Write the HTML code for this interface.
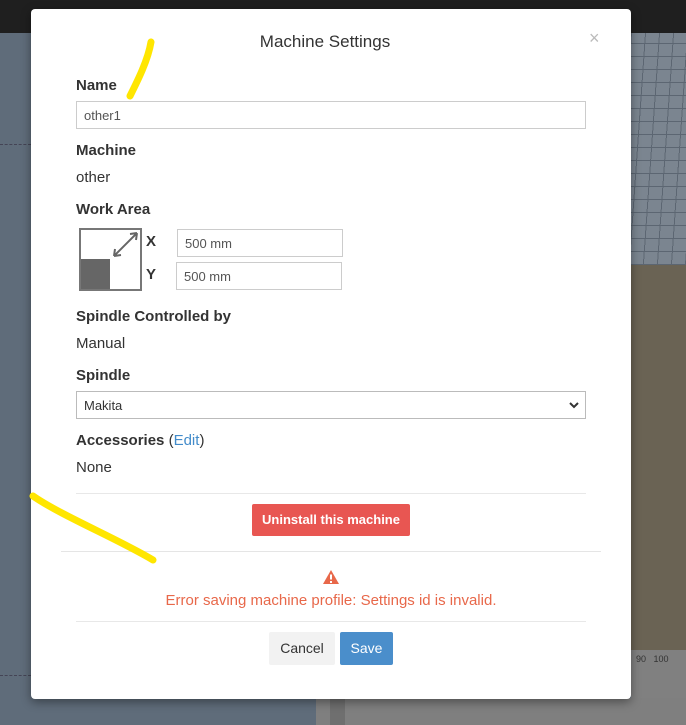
<!DOCTYPE html>
<html><head><style>
*{box-sizing:border-box}
body{margin:0;width:686px;height:725px;overflow:hidden;position:relative;font-family:"Liberation Sans",sans-serif;background:#5e6b79}
.abs{position:absolute}
.lbl{position:absolute;left:76px;font-weight:bold;font-size:15px;color:#333}
.val{position:absolute;left:76px;font-size:15px;color:#333}
.inp{position:absolute;border:1px solid #ccc;background:#fff;font-size:13px;color:#555;padding-left:7px;display:flex;align-items:center}
</style></head><body>
<div class="abs" style="left:0;top:0;width:686px;height:33px;background:#1f1f1f"></div>
<div class="abs" style="left:0;top:33px;width:686px;height:692px;background:#5f6c7a"></div>
<div class="abs" style="left:631px;top:33px;width:55px;height:232px;background:#7b8590;background-image:repeating-linear-gradient(0deg,#5c6672 0 1px,transparent 1px 13px),repeating-linear-gradient(94deg,#5c6672 0 1px,transparent 1px 14px)"></div>
<div class="abs" style="left:631px;top:265px;width:55px;height:385px;background:#6a6354"></div>
<div class="abs" style="left:631px;top:650px;width:55px;height:75px;background:#808080"></div>
<div class="abs" style="left:316px;top:698px;width:370px;height:27px;background:#7f7f7f"></div>
<div class="abs" style="left:330px;top:698px;width:15px;height:27px;background:#6f6f6f"></div>
<div class="abs" style="left:636px;top:654px;font-size:9px;color:#333">90&nbsp;&nbsp;&nbsp;100</div>
<div class="abs" style="left:0;top:144px;width:31px;border-top:1px dashed #445"></div>
<div class="abs" style="left:0;top:675px;width:31px;border-top:1px dashed #445"></div>

<div class="abs" style="left:31px;top:9px;width:600px;height:690px;background:#fff;border-radius:4px;box-shadow:0 3px 10px rgba(0,0,0,.4)"></div>
<div class="abs" style="left:0;top:32px;width:650px;text-align:center;font-size:17px;color:#333;padding-left:0"><span style="position:relative;left:0">&nbsp;</span></div>
<div class="abs" style="left:31px;top:32px;width:588px;text-align:center;font-size:17px;color:#333">Machine Settings</div>
<div class="abs" style="left:589px;top:28px;font-size:18px;color:#bbb">×</div>

<div class="lbl" style="top:77px">Name</div>
<div class="inp" style="left:76px;top:101px;width:510px;height:28px">other1</div>
<div class="lbl" style="top:142px">Machine</div>
<div class="val" style="top:169px">other</div>
<div class="lbl" style="top:201px">Work Area</div>
<div class="abs" style="left:79px;top:228px;width:63px;height:63px;border:2px solid #777;background:#fff"></div>
<div class="abs" style="left:81px;top:259px;width:29px;height:30px;background:#666"></div>
<svg class="abs" style="left:110px;top:230px" width="32" height="30" viewBox="0 0 32 30"><path d="M4 26L27 3M27 3l-7 1M27 3l-1 7M4 26l1-7M4 26l7-1" stroke="#666" stroke-width="2" fill="none"/></svg>
<div class="lbl" style="left:146px;top:233px">X</div>
<div class="lbl" style="left:146px;top:266px">Y</div>
<div class="inp" style="left:177px;top:229px;width:166px;height:28px">500 mm</div>
<div class="inp" style="left:176px;top:262px;width:166px;height:28px">500 mm</div>
<div class="lbl" style="top:308px">Spindle Controlled by</div>
<div class="val" style="top:335px">Manual</div>
<div class="lbl" style="top:367px">Spindle</div>
<div class="inp" style="left:76px;top:391px;width:510px;height:28px;color:#333;border-color:#bbb">Makita<svg style="position:absolute;right:6px;top:10px" width="10" height="7"><path d="M1 1l4 4 4-4" stroke="#333" stroke-width="2" fill="none"/></svg></div>
<div class="lbl" style="top:432px">Accessories <span style="font-weight:normal;color:#333">(<span style="color:#428bca">Edit</span>)</span></div>
<div class="val" style="top:459px">None</div>
<div class="abs" style="left:76px;top:493px;width:510px;border-top:1px solid #e8e8e8"></div>
<div class="abs" style="left:252px;top:504px;width:158px;height:32px;background:#e85652;border-radius:2px;color:#fff;font-weight:bold;font-size:13px;text-align:center;line-height:32px">Uninstall this machine</div>
<div class="abs" style="left:61px;top:551px;width:540px;border-top:1px solid #e5e5e5"></div>
<svg class="abs" style="left:322px;top:569px" width="18" height="16"><path d="M9 1L17 15H1Z" fill="#e8684a"/><rect x="8" y="5.5" width="2" height="5" fill="#fff"/><rect x="8" y="12" width="2" height="2" fill="#fff"/></svg>
<div class="abs" style="left:31px;top:592px;width:600px;text-align:center;font-size:15px;color:#e8684a">Error saving machine profile: Settings id is invalid.</div>
<div class="abs" style="left:76px;top:621px;width:510px;border-top:1px solid #e8e8e8"></div>
<div class="abs" style="left:269px;top:632px;width:66px;height:33px;background:#f2f2f2;border-radius:2px;color:#333;font-size:14px;text-align:center;line-height:33px">Cancel</div>
<div class="abs" style="left:340px;top:632px;width:53px;height:33px;background:#4a8ecb;border-radius:2px;color:#fff;font-size:14px;text-align:center;line-height:33px">Save</div>

<svg class="abs" style="left:0;top:0" width="686" height="725"><path d="M151 42C148 60 138 80 130 96" stroke="#ffe600" stroke-width="7" stroke-linecap="round" fill="none"/><path d="M33 496C60 515 120 540 153 560" stroke="#ffe600" stroke-width="7" stroke-linecap="round" fill="none"/></svg>
</body></html>
